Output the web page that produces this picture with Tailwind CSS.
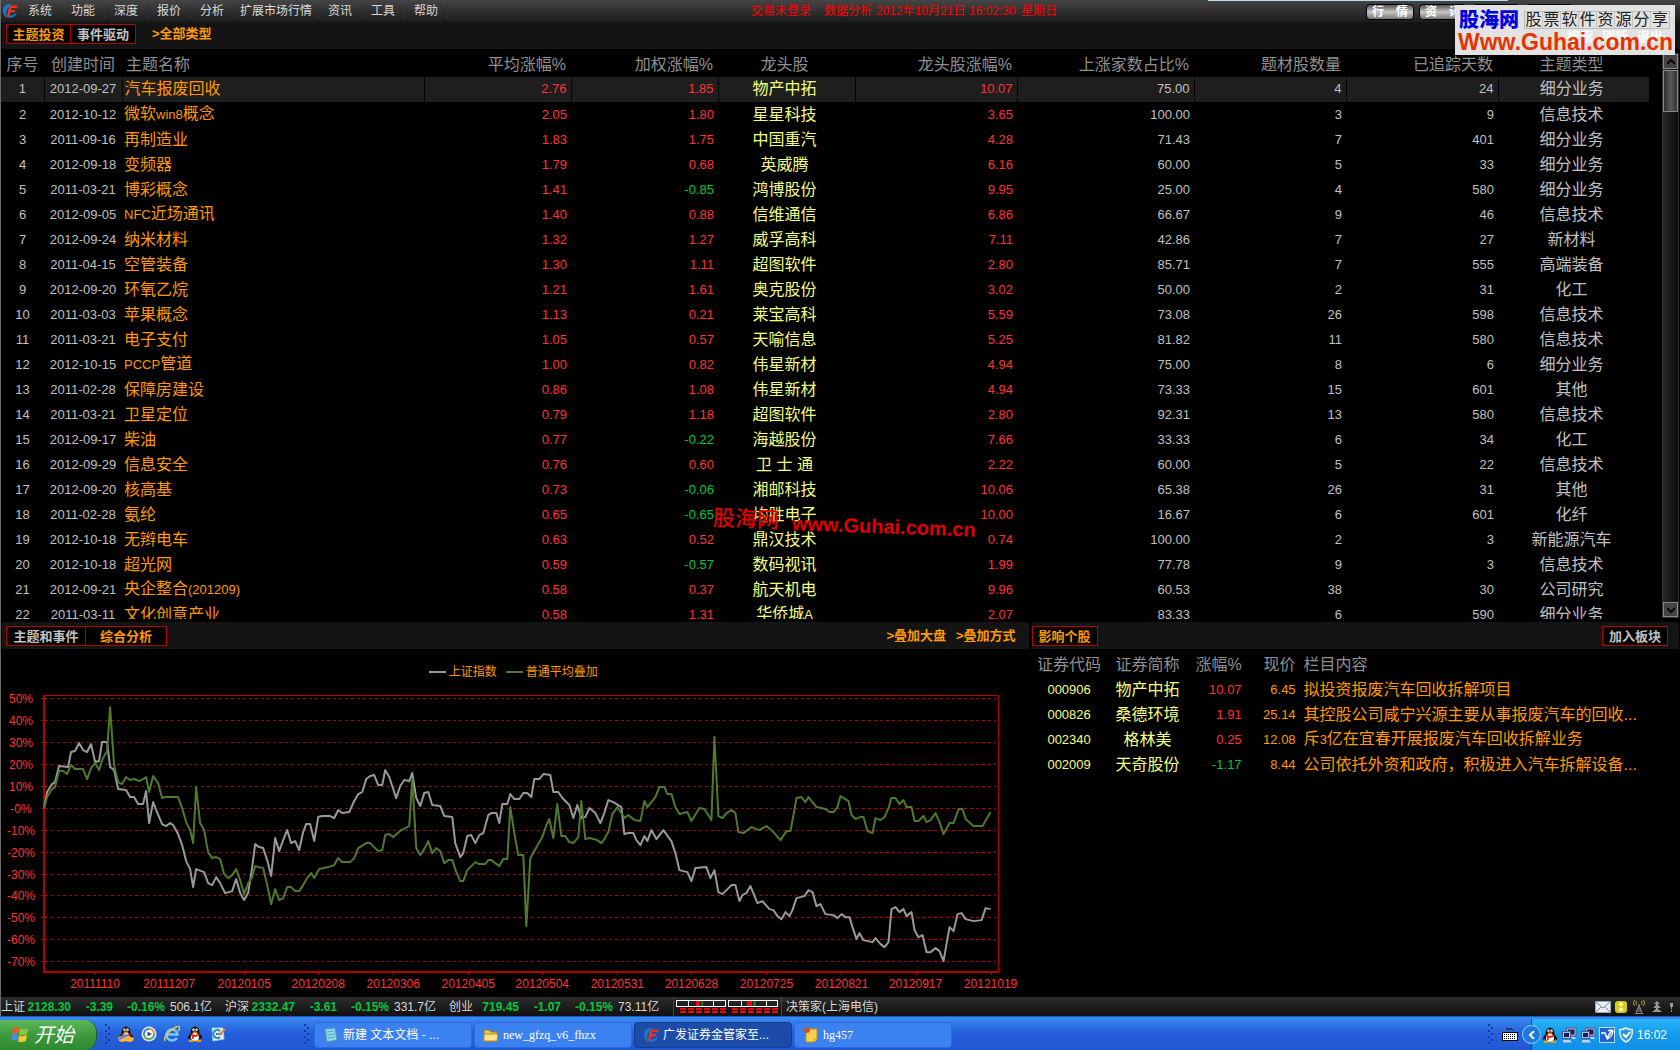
<!DOCTYPE html>
<html lang="zh-CN">
<head>
    <meta charset="UTF-8">
    <meta name="viewport" content="width=device-width, initial-scale=1.0">
    <title>广发证券金管家</title>
    <script src="https://cdn.jsdelivr.net/npm/@tailwindcss/browser@4"></script>
</head>
<body class="h-screen flex flex-col overflow-hidden bg-black text-[#c0c0c0] font-['Liberation_Sans','Noto_Sans_CJK_SC',sans-serif]">

    <!-- shared icons -->
    <svg class="hidden">
        <symbol id="logo" viewBox="0 0 16 16">
            <path d="M10 1C4 0 0 4 1 9c.4 3 2 5 4 6-1.500-5-.5-10 5-14z" fill="#1478c8"/>
            <path d="M6 15c4 .5 8-1.500 9-6-2 2.500-4 3.500-7 3.500z" fill="#1478c8"/>
            <path d="M8 2.500h8l-1 2.500H9.500L9 7h4.500l-1 2.500H8.500L7 14H4.500L6.500 6C7 4 7 3 8 2.500z" fill="#e8321e"/>
        </symbol>
        <symbol id="penguin" viewBox="0 0 16 16">
            <path d="M3 8C1 10 .5 12 1 13l2-1zM13 8c2 2 2.500 4 2 5l-2-1z" fill="#111"/>
            <ellipse cx="8" cy="6.500" rx="4.500" ry="6" fill="#111"/>
            <ellipse cx="8" cy="10.500" rx="5.500" ry="4.500" fill="#111"/>
            <ellipse cx="8" cy="11" rx="4" ry="4" fill="#fff"/>
            <ellipse cx="6.500" cy="3.800" rx="1.200" ry="1.500" fill="#fff"/>
            <ellipse cx="9.500" cy="3.800" rx="1.200" ry="1.500" fill="#fff"/>
            <circle cx="6.800" cy="4" r=".5"/><circle cx="9.200" cy="4" r=".5"/>
            <ellipse cx="8" cy="6.300" rx="2.500" ry=".8" fill="#f90"/>
            <path d="M3.500 7.500q4.500 2.500 9 0v2q-3 1.500-5.500 1.200L6.500 13H5l.3-2.800q-1-.2-1.800-.8z" fill="#e31b12"/>
            <ellipse cx="4.500" cy="15" rx="3" ry="1.200" fill="#f59a00"/>
            <ellipse cx="11.500" cy="15" rx="3" ry="1.200" fill="#f59a00"/>
        </symbol>
        <symbol id="monitors" viewBox="0 0 16 16">
            <rect x="5.500" y="1" width="9.500" height="8" fill="#b4b9d8" stroke="#555c8c"/>
            <rect x="7" y="2.500" width="6.500" height="5" fill="#16205a"/>
            <rect x="1.500" y="4.500" width="8" height="7" fill="#b4b9d8" stroke="#555c8c"/>
            <rect x="3" y="6" width="5" height="4" fill="#16205a"/>
            <path d="M2 13h7l2 2.500H2zM10 10h4l1 2h-4z" fill="#c9cde4"/>
        </symbol>
        <symbol id="grip" viewBox="0 0 6 20">
            <g fill="#123c9c">
                <rect x="0" y="0" width="2" height="2"/><rect x="3" y="3" width="2" height="2"/>
                <rect x="0" y="6" width="2" height="2"/><rect x="3" y="9" width="2" height="2"/>
                <rect x="0" y="12" width="2" height="2"/><rect x="3" y="15" width="2" height="2"/>
                <rect x="0" y="18" width="2" height="2"/>
            </g>
        </symbol>
    </svg>

    <div class="relative flex-1 min-h-0 flex flex-col border-l border-[#6a6a6a]">

        <!-- menu bar -->
        <header class="h-[22px] shrink-0 flex items-center bg-linear-to-b from-[#454545] to-[#1c1c1c] text-xs text-[#d8d8d8]">
            <nav class="flex items-center w-[750px] shrink-0 h-full">
                <svg class="w-4 h-4 ml-px mr-px"><use href="#logo"/></svg>
                <button class="w-[43px] h-4 border-r border-[#333]">系统</button>
                <button class="w-[43px] h-4 border-r border-[#333]">功能</button>
                <button class="w-[43px] h-4 border-r border-[#333]">深度</button>
                <button class="w-[43px] h-4 border-r border-[#333]">报价</button>
                <button class="w-[43px] h-4 border-r border-[#333]">分析</button>
                <button class="w-[85px] h-4 border-r border-[#333]">扩展市场行情</button>
                <button class="w-[43px] h-4 border-r border-[#333]">资讯</button>
                <button class="w-[43px] h-4 border-r border-[#333]">工具</button>
                <button class="w-[43px] h-4 border-r border-[#333]">帮助</button>
            </nav>
            <div class="flex items-center text-[#f00] whitespace-nowrap">
                <span class="w-[73px]">交易未登录</span>
                <span class="w-[52px]">数据分析</span>
                <span class="w-[93px]">2012年10月21日</span>
                <span class="w-[52px]">16:02:30</span>
                <span>星期日</span>
            </div>
            <div class="ml-auto mr-[107px] flex gap-[5px] pt-px font-bold text-white">
                <button class="w-12 h-4 flex items-center justify-between px-[5px] rounded-sm border border-black bg-linear-to-b from-[#555] via-[#c8c8c8] to-[#777]"><span>行</span><span>情</span></button>
                <button class="w-12 h-4 flex items-center justify-between px-[5px] rounded-sm border border-black bg-linear-to-b from-[#555] via-[#c8c8c8] to-[#777]"><span>资</span><span>讯</span></button>
                <button aria-label="交易" class="w-12 h-4 rounded-sm border border-black bg-linear-to-b from-[#555] via-[#c8c8c8] to-[#777]"></button>
                <button aria-label="网站" class="w-12 h-4 rounded-sm border border-black bg-linear-to-b from-[#555] via-[#c8c8c8] to-[#777]"></button>
            </div>
        </header>
        <div class="absolute top-0 right-[172px] w-[300px] h-px bg-[#b8dcea]"></div>

        <!-- site banner over the top right corner -->
        <div class="absolute z-10 top-[5px] right-[5px] w-[220px] h-[50px] bg-[#e2e2e2]">
            <div class="absolute right-3 top-[22px] flex gap-[9px] text-[13px] leading-5 font-bold text-white">
                <span>搜索</span><span>刷新</span><span>退出</span>
            </div>
            <div class="relative flex items-center justify-between pl-1 pr-[5px] pt-[3px]">
                <span class="text-xl leading-6 font-black text-[#0000e0]">股海网</span>
                <span class="flex h-[18px] text-base leading-4 text-[#222] border border-[#bbb] divide-x divide-[#c4c4c4]">
                    <span class="w-[18px] text-center">股</span><span class="w-[18px] text-center">票</span><span class="w-[18px] text-center">软</span><span class="w-[18px] text-center">件</span><span class="w-[18px] text-center">资</span><span class="w-[18px] text-center">源</span><span class="w-[18px] text-center">分</span><span class="w-[18px] text-center">享</span>
                </span>
            </div>
            <a href="#" class="relative block pl-[3px] text-[23px] leading-5 font-black text-[#e63200]">Www.Guhai.com.cn</a>
        </div>

        <!-- theme tabs -->
        <div class="h-[27px] shrink-0 ml-px flex items-start pt-[2px] pl-1 bg-[#141414] text-[13px] font-bold">
            <div class="flex h-5 border border-[#b40000] divide-x divide-[#b40000] bg-black">
                <button class="w-16 text-[#ff9900]">主题投资</button>
                <button class="w-16">事件驱动</button>
            </div>
            <button class="ml-4 h-5 text-[#ff9900]">&gt;全部类型</button>
        </div>

        <!-- theme table -->
        <section class="flex-[573] min-h-0 flex">
            <div class="flex-1 min-w-0 mb-[3px] overflow-hidden">
                <table class="w-full table-fixed border-collapse whitespace-nowrap">
                    <colgroup>
                        <col class="w-[43px]"><col class="w-[78px]"><col><col class="w-[147px]"><col class="w-[147px]"><col class="w-[137px]"><col class="w-[162px]"><col class="w-[177px]"><col class="w-[152px]"><col class="w-[152px]"><col class="w-[151px]">
                    </colgroup>
                    <thead class="text-base leading-6 text-[#909090]">
                        <tr class="h-7">
                            <th class="pt-1 font-normal">序号</th>
                            <th class="pt-1 font-normal">创建时间</th>
                            <th class="pt-1 font-normal text-left pl-1">主题名称</th>
                            <th class="pt-1 font-normal text-right pr-[5px]">平均涨幅%</th>
                            <th class="pt-1 font-normal text-right pr-[5px]">加权涨幅%</th>
                            <th class="pt-1 pr-1 font-normal">龙头股</th>
                            <th class="pt-1 font-normal text-right pr-[5px]">龙头股涨幅%</th>
                            <th class="pt-1 font-normal text-right pr-[5px]">上涨家数占比%</th>
                            <th class="pt-1 font-normal text-right pr-[5px]">题材股数量</th>
                            <th class="pt-1 font-normal text-right pr-[5px]">已追踪天数</th>
                            <th class="pt-1 pr-1 font-normal">主题类型</th>
                        </tr>
                    </thead>
                    <tbody id="themes" class="text-[13px] leading-5"></tbody>
                </table>
            </div>
            <div class="w-[13px]"></div>
            <div class="w-[17px] mt-1 mb-1 mr-px flex flex-col border border-[#333] bg-linear-to-r from-[#2a2a2a] to-[#0c0c0c]">
                <button aria-label="向上" class="h-[15px] flex items-center justify-center border border-[#888] bg-[#444]"><svg class="w-2 h-2" viewBox="0 0 8 8"><path d="M0 6l4-4 4 4" fill="none" stroke="#000" stroke-width="2"/></svg></button>
                <div class="h-[42px] mt-px border border-[#888] bg-linear-to-r from-[#2e2e2e] via-[#5a5a5a] to-[#333]"></div>
                <button aria-label="向下" class="mt-auto h-[15px] flex items-center justify-center border border-[#888] bg-[#444]"><svg class="w-2 h-2" viewBox="0 0 8 8"><path d="M0 2l4 4 4-4" fill="none" stroke="#000" stroke-width="2"/></svg></button>
            </div>
        </section>

        <!-- watermark -->
        <div class="absolute left-[712px] top-[511px] flex gap-[13px] rotate-2 whitespace-nowrap text-[#e00000] pointer-events-none">
            <span class="text-[22px] leading-6 font-medium">股海网</span>
            <span class="pt-[2px] text-xl leading-6 font-bold">www.Guhai.com.cn</span>
        </div>

        <div class="flex-[375] min-h-0 flex gap-[3px] ml-px">
            <!-- chart -->
            <section class="flex-[1026] min-w-0 flex flex-col">
                <div class="h-[27px] shrink-0 flex items-start pt-1 pl-1 pr-[13px] bg-[#141414] text-[13px] font-bold">
                    <div class="flex h-5 border border-[#b40000] divide-x divide-[#b40000] bg-black">
                        <button class="w-[79px]">主题和事件</button>
                        <button class="w-20 text-[#ff9900]">综合分析</button>
                    </div>
                    <button class="ml-auto h-5 text-[#ff9900]">&gt;叠加大盘</button>
                    <button class="ml-[10px] h-5 text-[#ff9900]">&gt;叠加方式</button>
                </div>
                <div class="h-[41px] shrink-0 pt-1 pr-1 flex items-center justify-center gap-[3px] text-xs text-[#ff9900]">
                    <i class="w-[17px] h-[2px] bg-[#999]"></i><span>上证指数</span>
                    <i class="w-[17px] h-[2px] ml-[6px] bg-[#4f7a2e]"></i><span>普通平均叠加</span>
                </div>
                <svg id="chart" viewBox="2 10 1026 306" class="w-full text-xs" fill="#ff3333">
                    <g id="grid" stroke="#b40000" fill="none" shape-rendering="crispEdges"></g>
                    <g id="labels" text-anchor="middle"></g>
                    <polyline fill="none" stroke="#999" stroke-width="2" stroke-linejoin="round" points="
                        44,128 47,112 52,104 55,102 59,86 68,87 71,72 75,71 79,63 83,70 87,72 91,64 95,82 99,81 102,62 107,62
                        110,87 114,90 118,109 126,110 130,117 134,117 138,124 143,124 146,111 149,143 153,122 157,132 162,144 166,146
                        170,143 173,145 178,154 182,165 186,181 190,189 193,207 196,189 204,192 208,203 212,205 216,197 220,203 225,213
                        232,211 236,199 240,213 244,220 248,213 252,187 255,164 259,167 263,168 267,180 271,196 275,158 279,171 283,160
                        287,150 291,163 295,161 299,170 303,152 306,144 310,144 314,161 318,137 322,136 330,136 334,138 338,130 342,133
                        349,132 353,123 358,114 362,112 366,99 370,96 374,95 378,105 382,105 385,90 389,97 393,109 396,118 400,106
                        404,100 409,101 412,93 416,118 420,126 424,113 428,112 432,125 440,126 444,136 452,137 455,163 460,177 463,173
                        467,156 471,155 475,163 479,155 483,153 488,135 491,133 496,133 499,143 502,124 507,124 510,114 514,119 519,119
                        523,113 527,113 531,117 534,99 539,99 543,94 550,95 553,112 558,112 562,118 569,125 573,138 577,125 581,138
                        585,137 589,128 595,133 600,143 604,133 608,120 613,122 621,127 624,154 628,153 633,153 636,160 640,165 644,156
                        647,161 651,150 656,159 663,150 668,157 671,161 675,173 679,190 687,192 691,201 695,188 706,187 710,198 714,190
                        718,212 722,214 731,205 735,205 739,221 742,215 746,213 750,206 757,223 762,221 769,229 773,230 777,236 781,239
                        785,232 789,236 792,230 796,218 804,216 808,210 812,212 816,226 820,224 825,234 833,235 837,238 841,234 845,237
                        849,237 852,247 856,259 859,253 863,260 872,262 875,258 880,264 884,267 888,262 891,229 895,227 899,232 903,229
                        906,236 911,232 914,250 918,257 922,255 926,272 930,272 935,268 939,271 943,281 947,258 949,247 953,251 957,234
                        961,233 965,239 973,241 981,240 985,228 990,229"/>
                    <polyline fill="none" stroke="#4f7a2e" stroke-width="2" stroke-linejoin="round" points="
                        44,128 47,117 52,109 55,107 59,91 63,91 67,94 71,85 75,89 83,89 87,99 91,88 95,83 99,90 103,78 107,71
                        110,27 114,85 118,102 122,104 126,97 130,100 134,99 139,101 143,99 146,97 149,112 153,96 158,103 162,118 165,117
                        178,117 182,128 186,142 190,150 193,163 196,107 200,143 204,150 208,172 212,178 216,177 220,179 224,194 228,198
                        232,195 236,189 240,200 244,214 248,203 252,197 255,186 263,188 267,205 271,224 275,209 279,220 283,218 287,207
                        291,207 295,211 299,211 303,205 307,198 311,193 314,198 319,189 328,187 334,185 338,178 342,182 350,182 354,178
                        358,168 366,163 370,163 378,171 382,170 385,155 389,154 393,157 401,150 409,146 412,99 416,168 420,175 424,169
                        428,161 432,173 436,168 440,171 444,183 448,180 452,180 456,192 460,201 463,201 467,190 475,182 479,184 485,184
                        488,180 491,180 499,186 503,179 507,179 510,127 514,153 518,175 523,175 526,246 530,178 534,171 542,157 546,145
                        549,139 553,158 557,124 561,156 565,156 569,162 573,163 578,157 581,121 585,159 589,158 597,160 601,163 604,159
                        608,152 612,134 617,127 624,138 628,135 634,140 640,141 644,121 647,127 655,117 659,107 664,107 667,114 671,114
                        675,127 679,134 687,132 691,141 699,128 704,129 711,140 714,57 718,136 722,138 726,133 731,130 735,133 738,152
                        743,153 751,147 759,150 766,146 773,152 780,160 786,151 790,151 793,135 796,118 801,117 805,122 808,117 816,127
                        825,129 829,132 833,132 837,127 840,116 848,121 851,135 855,139 860,137 863,137 867,151 872,153 875,138 880,140
                        884,137 888,128 891,118 895,118 899,124 903,120 906,127 911,127 914,141 918,141 923,136 926,142 930,140 935,133
                        939,142 943,154 949,143 953,143 958,129 962,129 965,139 973,146 982,146 990,132"/>
                </svg>
            </section>

            <!-- related stocks -->
            <section class="flex-[647] min-w-0 mr-px">
                <div class="h-[27px] flex items-start justify-between pt-1 pr-[11px] bg-[#141414] text-[13px] font-bold">
                    <button class="w-[66px] h-5 border border-[#b40000] bg-black text-[#ff9900]">影响个股</button>
                    <button class="w-[66px] h-5 border border-[#b40000] bg-black">加入板块</button>
                </div>
                <table class="w-full table-fixed whitespace-nowrap">
                    <colgroup><col class="w-[75px]"><col class="w-[82px]"><col class="w-[53px]"><col class="w-[54px]"><col></colgroup>
                    <thead class="text-base leading-6 text-[#909090]">
                        <tr class="h-7">
                            <th class="pt-1 font-normal">证券代码</th>
                            <th class="pt-1 font-normal">证券简称</th>
                            <th class="pt-1 font-normal text-right">涨幅%</th>
                            <th class="pt-1 font-normal text-right">现价</th>
                            <th class="pt-1 font-normal text-left pl-2">栏目内容</th>
                        </tr>
                    </thead>
                    <tbody id="stocks" class="text-[13px] leading-5"></tbody>
                </table>
            </section>
        </div>

        <!-- index bar -->
        <footer class="h-[19px] shrink-0 flex items-center bg-linear-to-b from-[#2c2c2c] to-[#101010] text-xs text-[#d8d8d8] whitespace-nowrap">
            <div id="indices" class="flex"></div>
            <div class="h-full flex items-center px-[2px] border-x border-[#444]">
                <svg class="w-[103px] h-[14px]" viewBox="0 0 103 14" shape-rendering="crispEdges">
                    <g fill="none" stroke="#fff">
                        <path d="M.5 .5h49v6H.500zM12.500 .5v6M25.500 .5v6M37.500 .5v6M52.500 .5h49v6h-49zM65.500 .5v6M78.500 .5v6M90.500 .5v6"/>
                    </g>
                    <path d="M20 1h4v5h-4zM71 1h5v5h-5z" fill="#f00"/>
                    <path d="M25 1h2v5h-2zM77 1h3v5h-3z" fill="#080"/>
                    <path d="M4 9h46M4 12h46M56 9h46M56 12h46" stroke="#f00" stroke-width="2" stroke-dasharray="6 2"/>
                </svg>
            </div>
            <span class="ml-1">决策家(上海电信)</span>
            <div class="ml-auto mr-[5px] flex items-center gap-1">
                <svg class="w-4 h-3" viewBox="0 0 16 12"><path d="M.5 .5h15v11H.5z" fill="#e8eef4" stroke="#9ab"/><path d="M1 1l7 6 7-6M1 11l5-5M15 11l-5-5" fill="none" stroke="#789"/></svg>
                <svg class="w-3 h-3" viewBox="0 0 12 12"><rect width="12" height="12" rx="3" fill="#d6cc1e"/><path d="M6 1l3 3H7v2H5V4H3zM4 7h4v3H4z" fill="#fff8b0"/></svg>
                <svg class="w-4 h-4" viewBox="-2 0 16 16"><path d="M6 5v5M6 6L3 14M6 6l3 8M4 10h4M3 12h6M2 14.500h8" stroke="#888" fill="none"/><path d="M1.500 1q-2 3 0 6M3.500 2q-1 2 0 4M10.500 1q2 3 0 6M8.500 2q1 2 0 4" stroke="#a8a020" fill="none"/></svg>
                <svg class="w-3 h-3" viewBox="0 0 12 12"><path d="M6 0l3 3H7v1l3 3H7v1l4 3H1l4-3V7H2l3-3V3H3z" fill="#999"/></svg>
                <svg class="w-2 h-3" viewBox="0 0 8 12"><path d="M3 2h3v4H3zM4 6h1v2H4zM4 9h1v2H4z" fill="#999"/></svg>
            </div>
        </footer>
    </div>

    <!-- windows taskbar -->
    <div class="h-[34px] shrink-0 flex items-stretch border-t border-[#1d57c4] bg-linear-to-b from-[#3a8af0] via-[#2560dc] to-[#2257d2] text-xs text-white whitespace-nowrap">
        <button class="w-[97px] mt-[3px] flex items-center gap-[5px] pl-[11px] rounded-r-xl bg-linear-to-b from-[#5cb85c] via-[#3c9a3c] to-[#2f8a2f] border-r border-[#1c5c28]">
            <svg class="w-[18px] h-[18px]" viewBox="0 0 18 18"><path d="M2 2q3-2 6 0L7 8Q4 6 1 8z" fill="#f0562a"/><path d="M9 2.500q4 1.500 8-.5l-1 6q-4 2-8 .5z" fill="#8cc83c"/><path d="M1 9q3-2 6 0l-1 6q-3-2-6 0z" fill="#4a8cf0"/><path d="M8 9.500q4 1.500 8-.5l-1 6q-4 2-8 .5z" fill="#fac828"/></svg>
            <span class="text-xl leading-6 italic">开始</span>
        </button>
        <div class="flex items-center gap-[7px] pl-2 w-[213px]">
            <svg class="w-[6px] h-5"><use href="#grip"/></svg>
            <svg class="w-4 h-4" viewBox="0 0 16 16"><use href="#penguin"/><path d="M0 11q8-3 16 1l-1 3H1z" fill="#f4b63c"/><path d="M1 13l8-4" stroke="#3c8cf0" stroke-width="2"/></svg>
            <svg class="w-4 h-4" viewBox="0 0 16 16"><circle cx="8" cy="8" r="7.500" fill="#dfe6f2"/><path d="M8 2a6 6 0 016 6H8z" fill="#f08c28"/><path d="M2 8a6 6 0 016-6v6z" fill="#3c78dc"/><path d="M2 8a6 6 0 0012 0z" fill="#58a058"/><circle cx="8" cy="8" r="4" fill="#fff"/><path d="M6.500 5.500L11 8l-4.500 2.500z" fill="#1450b4"/></svg>
            <svg class="w-4 h-4" viewBox="0 0 16 16"><path d="M13 12q-2 2.500-5 2.500a5.500 5.500 0 115.500-6H4" fill="none" stroke="#7cc8ff" stroke-width="2.500"/><path d="M1 15Q-1 11 7 4.500T15.500 1q.5 1.500-1 4" fill="none" stroke="#f4c832" stroke-width="1.500"/></svg>
            <svg class="w-4 h-4"><use href="#penguin"/></svg>
            <svg class="w-4 h-4" viewBox="0 0 16 16"><path d="M2 2h11l1 11-11 2z" fill="#e6f0fa" stroke="#9cc"/><path d="M10 5a4 4 0 100 6M6 8h6" fill="none" stroke="#2882d2" stroke-width="2"/><path d="M9 9l6-6" stroke="#e88228" stroke-width="2"/></svg>
            <svg class="w-[6px] h-5 ml-auto"><use href="#grip"/></svg>
        </div>
        <div class="flex-1 flex items-center gap-[2px] pl-1 pt-[2px]">
            <button class="w-[158px] h-[26px] flex items-center gap-1 px-2 rounded-sm bg-[#3c81f0] border border-[#2c68dc]">
                <svg class="w-4 h-4" viewBox="0 0 16 16"><path d="M2 2l10-1 2 12-10 2z" fill="#8fd8e8" stroke="#4a98b0"/><path d="M4 5l7-1M4 8l8-1M5 11l7-1" stroke="#5ab"/></svg>
                <span>新建 文本文档 - ...</span>
            </button>
            <button class="w-[158px] h-[26px] flex items-center gap-1 px-2 rounded-sm bg-[#3c81f0] border border-[#2c68dc] font-['Liberation_Serif',serif]">
                <svg class="w-4 h-4" viewBox="0 0 16 16"><path d="M1 3h5l2 2h6v9H1z" fill="#f0c850" stroke="#a87818"/><path d="M1 7h14l-1 7H1z" fill="#fce48c" stroke="#b88c20"/></svg>
                <span>new_gfzq_v6_fhzx</span>
            </button>
            <button class="w-[158px] h-[26px] flex items-center gap-1 px-2 rounded-sm bg-[#1c4ca8] border border-[#123c8c]">
                <svg class="w-4 h-4"><use href="#logo"/></svg>
                <span>广发证券金管家至...</span>
            </button>
            <button class="w-[158px] h-[26px] flex items-center gap-1 px-2 rounded-sm bg-[#3c81f0] border border-[#2c68dc] font-['Liberation_Serif',serif]">
                <svg class="w-4 h-4" viewBox="0 0 16 16"><path d="M3 2h11v10l-3 3H3z" fill="#fcd04c" stroke="#c89010"/><path d="M14 12h-3v3" fill="#fff0a0" stroke="#c89010"/><circle cx="4" cy="3" r="3" fill="#c85030"/></svg>
                <span>hg457</span>
            </button>
        </div>
        <div class="flex items-center gap-2 pr-[13px]">
            <svg class="w-[6px] h-5"><use href="#grip"/></svg>
            <svg class="w-4 h-4" viewBox="0 0 16 16"><path d="M4 2q2 2 4 1t4 2" fill="none" stroke="#000"/><rect x=".5" y="6.500" width="15" height="8" fill="#fff" stroke="#000"/><path d="M2 8.500h12M2 10.500h12M2 12.500h12" stroke="#000" stroke-dasharray="1 1"/></svg>
        </div>
        <div class="relative w-[149px] mt-[2px] flex items-center gap-[3px] pl-[10px] border-l border-[#0c3c96] bg-linear-to-b from-[#28b4f4] via-[#129aee] to-[#1290e6]">
            <button aria-label="展开" class="absolute -left-[10px] top-[6px] w-[19px] h-[19px] rounded-full border border-[#9cd0ff] bg-[#1e78e0] flex items-center justify-center"><svg class="w-2 h-2" viewBox="0 0 8 8"><path d="M6 0L2 4l4 4" fill="none" stroke="#fff" stroke-width="2"/></svg></button>
            <svg class="w-4 h-4"><use href="#penguin"/></svg>
            <svg class="w-4 h-4"><use href="#monitors"/></svg>
            <svg class="w-4 h-4"><use href="#monitors"/></svg>
            <svg class="w-4 h-4" viewBox="0 0 16 16"><rect x=".5" y=".5" width="15" height="15" fill="#2060d0" stroke="#b8d8ff"/><path d="M2 6h4l2 5 5-8M9 4q3-2 5 0-1 6-6 8" fill="none" stroke="#fff" stroke-width="1.500"/></svg>
            <svg class="w-4 h-4" viewBox="0 0 16 16"><path d="M8 0q4 2 7 2 1 10-7 14Q0 12 1 2q3 0 7-2z" fill="#e0e8f0"/><path d="M8 2q3 1.500 5.500 1.500Q14 11 8 14 2 11 2.500 3.500 5 3.500 8 2z" fill="#2c96dc"/><path d="M5 7l3 3 4-5" fill="none" stroke="#fff" stroke-width="2"/></svg>
            <span class="ml-auto mr-[13px]">16:02</span>
        </div>
    </div>

    <script>
        var themes = [
            ['2012-09-27', '汽车报废回收', '2.76', '1.85', '物产中拓', '10.07', '75.00', 4, 24, '细分业务'],
            ['2012-10-12', '微软win8概念', '2.05', '1.80', '星星科技', '3.65', '100.00', 3, 9, '信息技术'],
            ['2011-09-16', '再制造业', '1.83', '1.75', '中国重汽', '4.28', '71.43', 7, 401, '细分业务'],
            ['2012-09-18', '变频器', '1.79', '0.68', '英威腾', '6.16', '60.00', 5, 33, '细分业务'],
            ['2011-03-21', '博彩概念', '1.41', '-0.85', '鸿博股份', '9.95', '25.00', 4, 580, '细分业务'],
            ['2012-09-05', 'NFC近场通讯', '1.40', '0.88', '信维通信', '6.86', '66.67', 9, 46, '信息技术'],
            ['2012-09-24', '纳米材料', '1.32', '1.27', '威孚高科', '7.11', '42.86', 7, 27, '新材料'],
            ['2011-04-15', '空管装备', '1.30', '1.11', '超图软件', '2.80', '85.71', 7, 555, '高端装备'],
            ['2012-09-20', '环氧乙烷', '1.21', '1.61', '奥克股份', '3.02', '50.00', 2, 31, '化工'],
            ['2011-03-03', '苹果概念', '1.13', '0.21', '莱宝高科', '5.59', '73.08', 26, 598, '信息技术'],
            ['2011-03-21', '电子支付', '1.05', '0.57', '天喻信息', '5.25', '81.82', 11, 580, '信息技术'],
            ['2012-10-15', 'PCCP管道', '1.00', '0.82', '伟星新材', '4.94', '75.00', 8, 6, '细分业务'],
            ['2011-02-28', '保障房建设', '0.86', '1.08', '伟星新材', '4.94', '73.33', 15, 601, '其他'],
            ['2011-03-21', '卫星定位', '0.79', '1.18', '超图软件', '2.80', '92.31', 13, 580, '信息技术'],
            ['2012-09-17', '柴油', '0.77', '-0.22', '海越股份', '7.66', '33.33', 6, 34, '化工'],
            ['2012-09-29', '信息安全', '0.76', '0.60', '卫 士 通', '2.22', '60.00', 5, 22, '信息技术'],
            ['2012-09-20', '核高基', '0.73', '-0.06', '湘邮科技', '10.06', '65.38', 26, 31, '其他'],
            ['2011-02-28', '氨纶', '0.65', '-0.65', '均胜电子', '10.00', '16.67', 6, 601, '化纤'],
            ['2012-10-18', '无辫电车', '0.63', '0.52', '鼎汉技术', '0.74', '100.00', 2, 3, '新能源汽车'],
            ['2012-10-18', '超光网', '0.59', '-0.57', '数码视讯', '1.99', '77.78', 9, 3, '信息技术'],
            ['2012-09-21', '央企整合(201209)', '0.58', '0.37', '航天机电', '9.96', '60.53', 38, 30, '公司研究'],
            ['2011-03-11', '文化创意产业', '0.58', '1.31', '华侨城A', '2.07', '83.33', 6, 590, '细分业务']
        ];

        var stocks = [
            ['000906', '物产中拓', '10.07', '6.45', '拟投资报废汽车回收拆解项目'],
            ['000826', '桑德环境', '1.91', '25.14', '其控股公司咸宁兴源主要从事报废汽车的回收...'],
            ['002340', '格林美', '0.25', '12.08', '斥3亿在宜春开展报废汽车回收拆解业务'],
            ['002009', '天奇股份', '-1.17', '8.44', '公司依托外资和政府，积极进入汽车拆解设备...']
        ];

        var indices = [
            ['上证', '2128.30', '-3.39', '-0.16%', '506.1亿'],
            ['沪深', '2332.47', '-3.61', '-0.15%', '331.7亿'],
            ['创业', '719.45', '-1.07', '-0.15%', '73.11亿']
        ];

        // red for up, green for down
        function color(v) {
            return v[0] == '-' ? 'text-[#00c83c]' : 'text-[#ff3333]';
        }

        // latin letters and digits are set smaller than the chinese around them
        function mixed(s) {
            return s.replace(/[\w()]+/g, '<span class="text-[13px]">$&</span>');
        }

        document.getElementById('themes').innerHTML = themes.map(function(r, i) {
            var row = i == 0 ? 'h-[25px] border-b border-black divide-x divide-black bg-[#1e1e1e]' : 'h-[25px] border-b border-black';
            return '<tr class="' + row + '">' +
                '<td class="text-center">' + (i + 1) + '</td>' +
                '<td class="text-center">' + r[0] + '</td>' +
                '<td class="pl-[2px] text-base leading-5 text-[#ff9900]">' + mixed(r[1]) + '</td>' +
                '<td class="pr-1 text-right ' + color(r[2]) + '">' + r[2] + '</td>' +
                '<td class="pr-1 text-right ' + color(r[3]) + '">' + r[3] + '</td>' +
                '<td class="pr-1 text-center text-base leading-5 text-[#f4ff80]">' + mixed(r[4]) + '</td>' +
                '<td class="pr-1 text-right ' + color(r[5]) + '">' + r[5] + '</td>' +
                '<td class="pr-1 text-right">' + r[6] + '</td>' +
                '<td class="pr-1 text-right">' + r[7] + '</td>' +
                '<td class="pr-1 text-right">' + r[8] + '</td>' +
                '<td class="pr-1 text-center text-base leading-5">' + r[9] + '</td></tr>';
        }).join('');

        document.getElementById('stocks').innerHTML = stocks.map(function(r) {
            return '<tr class="h-[25px]">' +
                '<td class="text-center text-[#f4ff80]">' + r[0] + '</td>' +
                '<td class="text-center text-base leading-5 text-[#f4ff80]">' + r[1] + '</td>' +
                '<td class="text-right ' + color(r[2]) + '">' + r[2] + '</td>' +
                '<td class="text-right text-[#ff9900]">' + r[3] + '</td>' +
                '<td class="pl-2 text-base leading-5 text-[#ff9900]">' + mixed(r[4]) + '</td></tr>';
        }).join('');

        document.getElementById('indices').innerHTML = indices.map(function(r) {
            return '<div class="grid grid-cols-[24px_46px_42px_52px_60px] text-right">' +
                '<span class="text-left">' + r[0] + '</span>' +
                '<b class="text-[#00c83c]">' + r[1] + '</b>' +
                '<b class="text-[#00c83c]">' + r[2] + '</b>' +
                '<b class="text-[#00c83c]">' + r[3] + '</b>' +
                '<span class="pl-[5px] text-left">' + r[4] + '</span></div>';
        }).join('');

        var dates = ['20111110', '20111207', '20120105', '20120208', '20120306', '20120405', '20120504', '20120531', '20120628', '20120725', '20120821', '20120917', '20121019'];
        var grid = '<path d="M44 15.500H997.500V291"/><path stroke-width="2" d="M44 15V292H998"/>';
        var labels = '';
        for (var i = 0; i < 13; i++) {
            var y = 18 + i * 22 - (i > 8 ? 1 : 0);
            var x = Math.round(94.5 + i * 74.6);
            var pct = 50 - i * 10;
            grid += '<path d="M41 ' + (y + 0.5) + 'h4"/><path stroke-dasharray="3 3" d="M45 ' + (y + 0.5) + 'H995"/>';
            grid += '<path d="M' + (x + 0.5) + ' 292v3"/>';
            labels += '<text x="21" y="' + (y + 5) + '">' + (pct == 0 ? '-0' : pct) + '%</text>';
            labels += '<text x="' + x + '" y="308">' + dates[i] + '</text>';
        }
        document.getElementById('grid').innerHTML = grid;
        document.getElementById('labels').innerHTML = labels;
    </script>
</body>
</html>
